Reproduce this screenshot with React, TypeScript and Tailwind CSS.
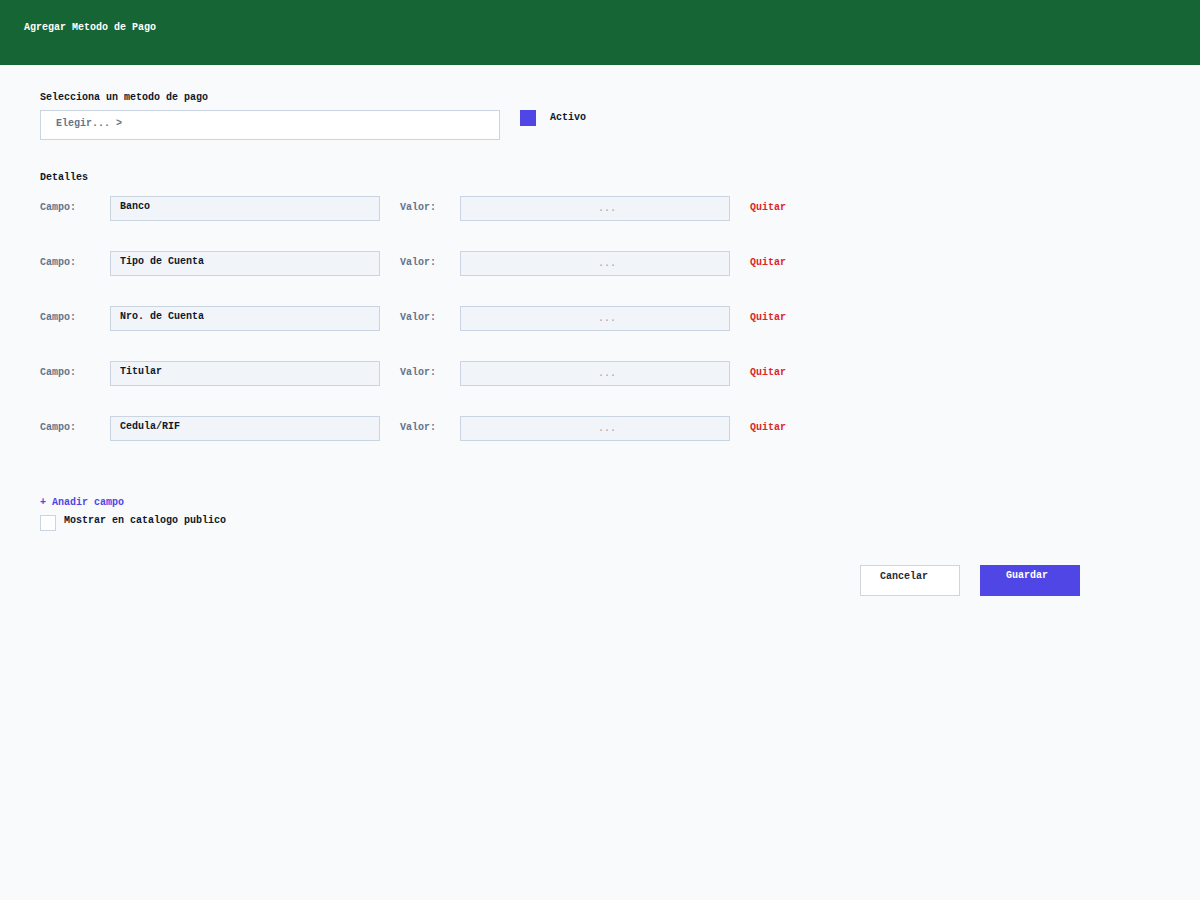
const fields = ['Banco', 'Tipo de Cuenta', 'Nro. de Cuenta', 'Titular', 'Cedula/RIF'];

export default function App() {
  return (
    <div className="min-h-[900px] bg-[#f8fafc] font-['Liberation_Mono',monospace] text-[10px] font-bold leading-[16px] text-[#0f172a]">
      <header className="h-[65px] bg-[#166534] px-6 pt-[20px] text-white">Agregar Metodo de Pago</header>

      <main className="px-10 pt-[25px]">
        <div className="flex items-start gap-5">
          <div className="w-[460px]">
            <div className="mb-1">Selecciona un metodo de pago</div>
            <div className="h-[30px] border border-[#cbd5e1] bg-white pl-[15px] pt-[5px] text-[#64748b]">Elegir... &gt;</div>
          </div>
          <div className="mt-[20px] flex items-start gap-[14px]">
            <div className="h-4 w-4 bg-[#4f46e5]" />
            <span>Activo</span>
          </div>
        </div>

        <div className="mt-[30px]">Detalles</div>

        <div className="mt-[10px] flex flex-col gap-[30px]">
          {fields.map((f) => (
            <div key={f} className="flex items-start">
              <span className="w-[70px] pt-[4px] text-[#64748b]">Campo:</span>
              <div className="h-[25px] w-[270px] border border-[#cbd5e1] bg-[#f1f5f9] pl-[9px] pt-[2px]">{f}</div>
              <span className="ml-5 w-[60px] pt-[4px] text-[#64748b]">Valor:</span>
              <div className="flex h-[25px] w-[270px] items-center justify-center border border-[#cbd5e1] bg-[#f1f5f9] pl-6 font-normal text-[#9ca3af]">...</div>
              <span className="ml-5 pt-[4px] text-[#dc2626]">Quitar</span>
            </div>
          ))}
        </div>

        <div className="mt-[54px] text-[#4f46e5]">+ Anadir campo</div>
        <div className="mt-[2px] flex items-start gap-2">
          <div className="mt-[2px] h-4 w-4 border border-[#cbd5e1] bg-white" />
          <span>Mostrar en catalogo publico</span>
        </div>

        <div className="mt-[34px] flex items-start justify-end gap-5 pr-[80px]">
          <div className="h-[31px] w-[100px] border border-[#d1d5db] bg-white pl-[19px] pt-[3px] text-[#1f2937]">Cancelar</div>
          <div className="h-[31px] w-[100px] bg-[#4f46e5] pl-[26px] pt-[3px] text-white">Guardar</div>
        </div>
      </main>
    </div>
  );
}
